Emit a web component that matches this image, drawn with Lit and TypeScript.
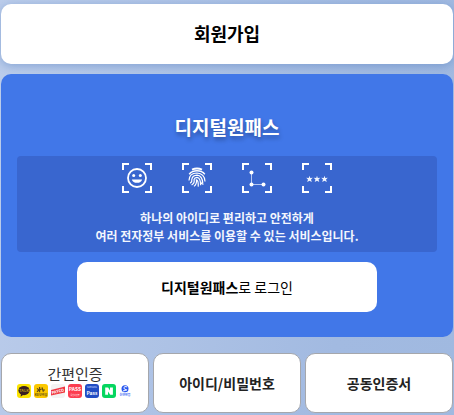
import { LitElement, html, css, svg } from "lit";
import { customElement } from "lit/decorators.js";

const frame = svg`<path class="frame" d="M1 7V1H7M23 1H29V7M29 23V29H23M7 29H1V23" />`;

const star = (x: number) =>
  svg`<path transform="translate(${x} 16)" d="M0-3.2L.8-1.1L3.3-1.2L1.5.6L2.3 3L0 1.7L-2.3 3L-1.5.6L-3.3-1.2L-.8-1.1Z" fill="#f0f4fd" />`;

const methods = [
  {
    label: "얼굴 인식",
    art: svg`<circle class="line" cx="15" cy="15" r="9" stroke-width="1.8" />
      <circle cx="11.7" cy="12.4" r="1.5" fill="#fff" /><circle cx="18.3" cy="12.4" r="1.5" fill="#fff" />
      <path d="M9.8 16.5H20.2A5.4 4.6 0 0 1 9.8 16.5Z" fill="#fff" />`,
  },
  {
    label: "지문",
    art: svg`<g class="line" stroke-width="1.2">
      <path d="M10 6.6Q15 4.6 20 6.6" stroke-width="2" />
      <path d="M7.2 11.2Q10 7.8 15 7.8T22.8 11.2" stroke-width="1.4" />
      <path d="M7 17.4Q7.2 10.2 15 10Q22.6 10.4 23 18.5" />
      <path d="M8.2 20.2Q10.4 18.6 9.8 16.4Q10.4 12.4 15 12.2Q20.4 12.6 20.8 20.6" />
      <path d="M9.6 22Q13 20 12 16.6Q12.6 14.4 15 14.4Q18.6 14.8 18.6 22.2" />
      <path d="M12 23.4Q15 21 14.4 16.8Q16.6 17.4 16.2 23.6" />
      <path d="M18.6 19Q19.4 21.4 21.4 21.4" /></g>`,
  },
  {
    label: "패턴",
    art: svg`<path d="M9.5 9.5V21.5H21.5" fill="none" stroke="#b4c7f2" stroke-width="1" />
      <circle cx="9.5" cy="9.5" r="2" fill="#fff" /><circle cx="9.5" cy="21.5" r="2" fill="#fff" />
      <circle cx="21.5" cy="21.5" r="2" fill="#fff" />`,
  },
  { label: "비밀번호", art: svg`${star(7.5)}${star(15)}${star(22.5)}` },
];

const providers = [
  svg`<rect width="14" height="14" rx="3" fill="#fbe300" />
    <ellipse cx="7" cy="6.6" rx="5.6" ry="4.6" fill="#392020" /><path d="M4 9L3.6 12.8L7.4 10Z" fill="#392020" />
    <text x="7" y="8" font-size="4" fill="#b79c1c">TALK</text>`,
  svg`<rect width="14" height="14" rx="3" fill="#fbc800" />
    <path d="M3 4.4L5 6L3 7.8M5.6 3V8.2M5.6 6L7.6 5M8 3.4L9.4 7.8M9 6H11" fill="none" stroke="#5e4a18" stroke-width="1.2" />
    <text x="7" y="12.4" font-size="3" fill="#5e4a18">KB모바일</text>`,
  svg`<rect width="14" height="14" rx="3" fill="#f3f3f3" />
    <path d="M0 6L14 2.6V8.6L0 11.6Z" fill="#f0353f" />
    <text transform="rotate(-13 7 8)" x="7" y="8.8" font-size="4" fill="#fff">PAYCO</text>`,
  svg`<rect width="14" height="14" rx="3" fill="#fc3d50" />
    <text x="7" y="7.4" font-size="5" fill="#fff">PASS</text>
    <text x="7" y="11.8" font-size="2" fill="#ffd1d6">통신사인증</text>`,
  svg`<rect width="14" height="14" rx="3" fill="#214dc4" />
    <text x="7" y="4.4" font-size="2" fill="#b8cbfa">SAMSUNG</text>
    <text x="7" y="10.6" font-size="5" fill="#fff">Pass</text>`,
  svg`<rect width="14" height="14" rx="3" fill="#05d65f" />
    <path d="M3.2 10.8V3.4H6.1L8 6.5V3.4H10.9V10.8H8.2L6 7.6V10.8Z" fill="#fff" />`,
  svg`<circle cx="6" cy="4.8" r="3.5" fill="#2554ef" />
    <path d="M8.2 2.9Q5.4 1.9 4.9 3.5T7 5.6T4 6.9" fill="none" stroke="#fff" stroke-width="1" />
    <text x="6" y="12.4" font-size="3" fill="#2554ef">신한인증</text>`,
];

@customElement("app-root")
export class AppRoot extends LitElement {
  static styles = css`
    :host {
      display: block;
      min-height: 100vh;
      box-sizing: border-box;
      padding: 4px 1px 2px;
      background: linear-gradient(100deg, #bccdeb, #a2bae1 75%, #a0b9e0);
      font-family: "Noto Sans CJK KR", "Noto Sans", sans-serif;
      color: #000;
    }
    button {
      font: inherit;
      color: inherit;
      margin: 0;
      padding: 0;
      border: 0;
      background: #fff;
      border-radius: 10px;
      cursor: pointer;
    }
    .join {
      display: block;
      width: 100%;
      height: 60px;
      padding-bottom: 2px;
      font-size: 18px;
      font-weight: 700;
      box-shadow: 0 2px 10px rgba(60, 110, 180, 0.4);
    }
    .pass {
      margin-top: 10px;
      padding: 38px 16px 25px;
      border-radius: 10px;
      background: #4177e8;
      text-align: center;
    }
    h2 {
      margin: 0 0 14px;
      font-size: 19px;
      line-height: 30px;
      font-weight: 700;
      color: #fff;
      text-shadow: 1px 3px 4px rgba(0, 0, 0, 0.3);
    }
    .info {
      padding: 7px 0;
      border-radius: 4px;
      background: #3966cf;
    }
    .methods {
      display: flex;
      justify-content: center;
      gap: 30px;
    }
    .methods svg {
      width: 30px;
      height: 30px;
    }
    .frame {
      fill: none;
      stroke: #fff;
      stroke-width: 2;
    }
    .line {
      fill: none;
      stroke: #fff;
    }
    p {
      margin: 16px 0 0;
      font-size: 12px;
      line-height: 18px;
      font-weight: 700;
      color: #f3f6fd;
    }
    .login {
      width: 300px;
      max-width: 100%;
      height: 50px;
      margin-top: 10px;
      font-size: 14px;
      vertical-align: top;
    }
    .others {
      display: grid;
      grid-template-columns: repeat(3, 1fr);
      gap: 4px;
      margin-top: 16px;
    }
    .others button {
      height: 60px;
      border: 1px solid #a5a7ac;
      font-size: 14px;
      font-weight: 700;
      color: #222;
    }
    .others .simple {
      display: flex;
      flex-direction: column;
      align-items: center;
      justify-content: center;
      padding-bottom: 4px;
      font-size: 15px;
      line-height: 20px;
      font-weight: 400;
      color: #333;
    }
    .providers {
      display: flex;
      gap: 3px;
    }
    .providers svg {
      width: 14px;
      height: 14px;
    }
    .providers text {
      text-anchor: middle;
      font-weight: 700;
    }
  `;

  render() {
    return html`
      <button class="join" type="button">회원가입</button>
      <section class="pass">
        <h2>디지털원패스</h2>
        <div class="info">
          <div class="methods">
            ${methods.map(
              (m) => html`<svg viewBox="0 0 30 30" role="img" aria-label=${m.label}>${frame}${m.art}</svg>`
            )}
          </div>
          <p>하나의 아이디로 편리하고 안전하게<br />여러 전자정부 서비스를 이용할 수 있는 서비스입니다.</p>
        </div>
        <button class="login" type="button"><b>디지털원패스</b>로 로그인</button>
      </section>
      <nav class="others">
        <button class="simple" type="button">
          <span>간편인증</span>
          <span class="providers">
            ${providers.map((art) => html`<svg viewBox="0 0 14 14" aria-hidden="true">${art}</svg>`)}
          </span>
        </button>
        <button type="button">아이디/비밀번호</button>
        <button type="button">공동인증서</button>
      </nav>
    `;
  }
}
